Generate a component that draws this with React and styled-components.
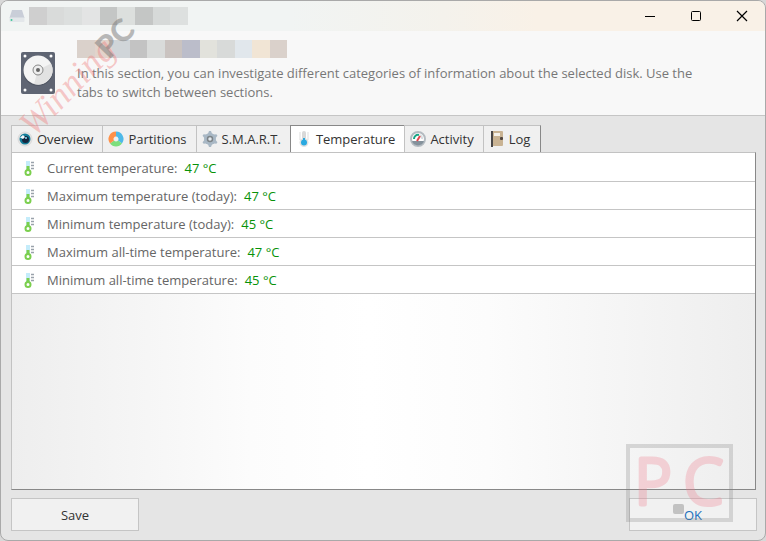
import { useState } from "react";
import styled, { createGlobalStyle } from "styled-components";

const TITLE_BLOCKS = [
  "#cfcfcf", "#d9dbda", "#dcdfde", "#e3e4e4", "#c4c6c5",
  "#dcdfdd", "#c4c6c5", "#d6d9d8", "#dde0df",
];

const NAME_BLOCKS = [
  "#dad1cb", "#e2d3cb", "#d0d5d9", "#c3c3c3", "#d9dbda", "#cac3c0",
  "#bbbdca", "#e2e2dc", "#d8dad9", "#e1e7ec", "#f1e5d5", "#dad1cb",
];

const READINGS = [
  { label: "Current temperature:", value: "47 °C" },
  { label: "Maximum temperature (today):", value: "47 °C" },
  { label: "Minimum temperature (today):", value: "45 °C" },
  { label: "Maximum all-time temperature:", value: "47 °C" },
  { label: "Minimum all-time temperature:", value: "45 °C" },
];

const DriveIcon = () => (
  <svg width="16" height="14" viewBox="0 0 16 14">
    <path d="M3 1h10l2.500 8H.5z" fill="#c9ced8" />
    <rect x=".5" y="8.500" width="15" height="4.500" rx="1" fill="#e3e7ea" />
    <circle cx="2.500" cy="11" r="1" fill="#3fc79a" />
  </svg>
);

const DiskIcon = () => (
  <svg width="36" height="44" viewBox="0 0 36 44">
    <rect x="1" y="1" width="34" height="42" rx="2" fill="#5f6573" />
    <circle cx="18" cy="20" r="15" fill="#505663" />
    <circle cx="18" cy="19" r="14.500" fill="#f4f4f4" />
    <path d="M18 19 31 12.500a14.500 14.500 0 0 1-17 20.500z" fill="#e2e2e2" />
    <circle cx="18" cy="19" r="5" fill="#eee" stroke="#888" />
    <circle cx="18" cy="19" r="2" fill="#666" />
    <g fill="#fff">
      <circle cx="5" cy="5" r="1.500" />
      <circle cx="31" cy="5" r="1.500" />
      <circle cx="5" cy="39" r="1.500" />
      <circle cx="31" cy="39" r="1.500" />
    </g>
  </svg>
);

const OverviewIcon = () => (
  <svg width="16" height="16" viewBox="0 0 16 16">
    <circle cx="8" cy="8" r="7" fill="#e6e3e2" stroke="#dadada" />
    <circle cx="8" cy="8" r="5.500" fill="#137d99" />
    <circle cx="8.500" cy="8.500" r="3.500" fill="#16263f" />
    <path d="M3 6.500 6 4l2 2-2 2z" fill="#f3fbff" />
    <circle cx="9" cy="7" r="1" fill="#8de0f5" />
  </svg>
);

const PartitionsIcon = () => (
  <svg width="16" height="16" viewBox="0 0 16 16" fill="none" strokeWidth="5">
    <path d="M8 3a5 5 0 0 1 4 8" stroke="#4eb9e8" />
    <path d="M12 11a5 5 0 0 1-8 0" stroke="#7ddf7d" />
    <path d="M4 11a5 5 0 0 1 4-8" stroke="#ff9149" />
  </svg>
);

const SmartIcon = () => (
  <svg width="16" height="16" viewBox="0 0 16 16">
    <g fill="#a9b8c5">
      <circle cx="8" cy="8" r="6" />
      {[0, 60, 120].map((angle) => (
        <path key={angle} d="M7 0h2l1.500 4v8L9 16H7l-1.500-4V4z" transform={`rotate(${angle} 8 8)`} />
      ))}
    </g>
    <circle cx="8" cy="8" r="2.500" fill="#e4e9ee" stroke="#7d8488" strokeWidth="1.500" />
  </svg>
);

const TemperatureIcon = () => (
  <svg width="16" height="16" viewBox="0 0 16 16">
    <path d="M3 2h2M3 4h2M3 6h2M3 8h2M11 2h2M11 4h2M11 6h2M11 8h2" stroke="#ddd" />
    <rect x="6" y="0" width="4" height="12" rx="2" fill="#d9d9d9" />
    <circle cx="8" cy="11.500" r="4.500" fill="#e2e2e2" />
    <path d="M8 7v4" stroke="#2aa9e0" strokeWidth="2" />
    <circle cx="8" cy="11.500" r="3" fill="#2aa9e0" />
  </svg>
);

const ActivityIcon = () => (
  <svg width="16" height="16" viewBox="0 0 16 16">
    <circle cx="8" cy="8" r="7" fill="#fff" stroke="#b4bbc1" strokeWidth="2" />
    <path d="M2 10h12a6.300 6.300 0 0 1-12 0z" fill="#84919b" />
    <path d="M4 8a4 4 0 0 1 5-4" stroke="#18a484" strokeWidth="2" fill="none" />
    <path d="M10 4a4 4 0 0 1 2 4" stroke="#d7dcde" strokeWidth="2" fill="none" />
    <path d="m7 10 3-5" stroke="#e4454c" strokeWidth="2" />
  </svg>
);

const LogIcon = () => (
  <svg width="16" height="16" viewBox="0 0 16 16">
    <rect x="2" y="0" width="12" height="15" rx="1" fill="#c9b393" />
    <rect x="2" y="0" width="2" height="16" fill="#494747" />
    <rect x="5" y="2" width="6" height="3" fill="#f5f1e9" />
    <rect x="11" y="6" width="3" height="3" rx="1" fill="#51453e" />
  </svg>
);

const ReadingIcon = () => (
  <svg width="12" height="16" viewBox="0 0 12 16">
    <rect x="2" y="1" width="4" height="11" fill="#c4ecfa" />
    <path d="M4 6v6" stroke="#7bcf4e" strokeWidth="3" />
    <circle cx="4" cy="12.500" r="2.500" fill="#fff" stroke="#7bcf4e" strokeWidth="2" />
    <path d="M7 2.500h3M7 5.500h3M7 8.500h3" stroke="#9aa2ab" strokeWidth="1.500" />
  </svg>
);

const TABS = [
  { name: "Overview", Icon: OverviewIcon },
  { name: "Partitions", Icon: PartitionsIcon },
  { name: "S.M.A.R.T.", Icon: SmartIcon },
  { name: "Temperature", Icon: TemperatureIcon },
  { name: "Activity", Icon: ActivityIcon },
  { name: "Log", Icon: LogIcon },
];

const App = () => {
  const [active, setActive] = useState("Temperature");

  return (
    <>
      <GlobalStyle />
      <Window>
        <TitleBar>
          <DriveIcon />
          <Mosaic $width={159}>
            {TITLE_BLOCKS.map((color, i) => (
              <Block key={i} $color={color} />
            ))}
          </Mosaic>
          <WindowControls>
            <ControlButton aria-label="Minimize">
              <svg width="12" height="12" viewBox="0 0 12 12">
                <path d="M1 6.500h10" stroke="#000" />
              </svg>
            </ControlButton>
            <ControlButton aria-label="Maximize">
              <svg width="12" height="12" viewBox="0 0 12 12">
                <rect x="1.500" y="1.500" width="9" height="9" rx="1" fill="none" stroke="#000" />
              </svg>
            </ControlButton>
            <ControlButton aria-label="Close">
              <svg width="12" height="12" viewBox="0 0 12 12">
                <path d="m1 1 10 10M11 1 1 11" stroke="#000" strokeWidth="1.200" />
              </svg>
            </ControlButton>
          </WindowControls>
        </TitleBar>

        <Header>
          <DiskIcon />
          <HeaderText>
            <Mosaic $width={210}>
              {NAME_BLOCKS.map((color, i) => (
                <Block key={i} $color={color} />
              ))}
            </Mosaic>
            <Description>
              In this section, you can investigate different categories of
              information about the selected disk. Use the tabs to switch
              between sections.
            </Description>
          </HeaderText>
          <WinningMark width="140" height="140" viewBox="0 0 140 140" aria-hidden="true">
            <g transform="translate(23 127) rotate(-46)">
              <WinningScript>Winning</WinningScript>
              <WinningBold x="108">PC</WinningBold>
            </g>
          </WinningMark>
        </Header>

        <Body>
          <TabList role="tablist">
            {TABS.map(({ name, Icon }) => (
              <Tab
                key={name}
                role="tab"
                aria-selected={active === name}
                $active={active === name}
                onClick={() => setActive(name)}
              >
                <Icon />
                {name}
              </Tab>
            ))}
          </TabList>
          <Panel role="tabpanel">
            <ReadingList>
              {READINGS.map(({ label, value }) => (
                <Reading key={label}>
                  <ReadingIcon />
                  <Label>{label}</Label>
                  <Value>{value}</Value>
                </Reading>
              ))}
            </ReadingList>
          </Panel>
          <Footer>
            <DialogButton>Save</DialogButton>
            <DialogButton $primary>OK</DialogButton>
            <Stamp width="107" height="78" viewBox="0 0 107 78" aria-hidden="true">
              <rect x="2" y="2" width="103" height="74" fill="none" stroke="#808080" strokeOpacity=".27" strokeWidth="4" />
              <rect x="47" y="60" width="11" height="10" rx="2" fill="#808080" fillOpacity=".42" />
              <StampText x="9" y="60">P</StampText>
              <StampText x="58" y="60">C</StampText>
            </Stamp>
          </Footer>
        </Body>
      </Window>
    </>
  );
};

export default App;

const GlobalStyle = createGlobalStyle`
  * {
    box-sizing: border-box;
  }
  body {
    margin: 0;
    background: #d8d8d8;
    font-family: "Open Sans", "Noto Sans", sans-serif;
    font-size: 13px;
  }
  button {
    font: inherit;
    color: inherit;
  }
  svg {
    flex-shrink: 0;
  }
`;

const Window = styled.div`
  display: flex;
  flex-direction: column;
  min-height: 100vh;
  border: 1px solid #a9a9a9;
  border-radius: 8px;
  background: #e5e5e5;
  overflow: hidden;
`;
const TitleBar = styled.div`
  display: flex;
  align-items: center;
  gap: 4px;
  height: 30px;
  padding-left: 8px;
  background: linear-gradient(90deg, #f1f4f3 38%, #f4f2ec 58%, #f9f1e7 70%);
`;
const Mosaic = styled.div`
  display: flex;
  width: ${({ $width }) => $width}px;
  height: 18px;
`;
const Block = styled.span`
  flex: 1;
  background: ${({ $color }) => $color};
`;
const WindowControls = styled.div`
  display: flex;
  align-self: stretch;
  margin-left: auto;
`;
const ControlButton = styled.button`
  display: flex;
  align-items: center;
  justify-content: center;
  width: 46px;
  padding: 0;
  border: none;
  background: none;
`;
const Header = styled.header`
  position: relative;
  display: flex;
  align-items: center;
  gap: 21px;
  min-height: 85px;
  padding: 0 56px 0 19px;
  border-bottom: 1px solid #c5c5c5;
  background: #f8f8f8;
`;
const HeaderText = styled.div`
  min-width: 0;
  padding-bottom: 4px;
`;
const Description = styled.p`
  margin: 6px 0 0;
  line-height: 19px;
  color: #777;
`;
const WinningMark = styled.svg`
  position: absolute;
  left: 10px;
  top: -20px;
  z-index: 1;
  overflow: visible;
  pointer-events: none;
`;
const WinningScript = styled.text`
  fill: #f08080;
  fill-opacity: 0.42;
  font: italic 36px "Liberation Serif", serif;
`;
const WinningBold = styled.text`
  fill: #777;
  fill-opacity: 0.5;
  font: 900 31px Lato, sans-serif;
`;
const Body = styled.main`
  display: flex;
  flex-direction: column;
  flex: 1;
  padding: 9px 9px 9px 10px;
`;
const TabList = styled.div`
  display: flex;
`;
const Tab = styled.button`
  display: flex;
  align-items: center;
  gap: 4px;
  min-width: 58px;
  height: 27px;
  padding: 0 9px 0 5px;
  border: 1px solid #c2c2c2;
  border-width: 1px 0 0 1px;
  background: ${({ $active }) => ($active ? "#fff" : "#f0f0f0")};
  border-color: ${({ $active }) => ($active ? "#888" : "#c2c2c2")};
  color: #333;
  &:last-child {
    border-right: 1px solid #888;
  }
`;
const Panel = styled.section`
  flex: 1;
  border: 1px solid #c2c2c2;
  border-right-color: #888;
  border-bottom-color: #888;
  background: linear-gradient(90deg, #eee, #fcfcfc 32%, #fff 48%, #fcfcfc 64%, #eee);
`;
const ReadingList = styled.div`
  padding-top: 1px;
  background: #fff;
`;
const Reading = styled.div`
  display: flex;
  align-items: center;
  height: 28px;
  padding-left: 12px;
  border-bottom: 1px solid #c5c5c5;
`;
const Label = styled.span`
  margin-left: 11px;
  color: #666;
`;
const Value = styled.span`
  margin-left: 7px;
  color: #089208;
`;
const Footer = styled.footer`
  position: relative;
  display: flex;
  justify-content: space-between;
  margin: 8px -1px 0 0;
`;
const DialogButton = styled.button`
  width: 128px;
  height: 33px;
  padding: 0;
  border: 1px solid #c5c5c5;
  background: #f1f1f1;
  color: ${({ $primary }) => ($primary ? "#1b6fbd" : "#333")};
`;
const Stamp = styled.svg`
  position: absolute;
  right: 24px;
  bottom: 9px;
  overflow: visible;
  pointer-events: none;
`;
const StampText = styled.text`
  fill: #f08090;
  stroke: #f08090;
  stroke-width: 5px;
  stroke-linejoin: round;
  font: 300 62px "Open Sans", sans-serif;
  opacity: 0.3;
`;
